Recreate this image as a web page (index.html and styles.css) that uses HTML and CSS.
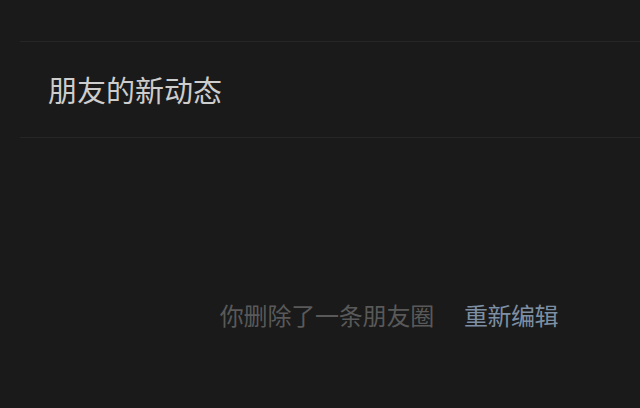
FILE: index.html
```html
<!DOCTYPE html>
<html lang="zh">
<head>
<meta charset="utf-8">
<link rel="stylesheet" href="styles.css">
</head>
<body>
<div class="page">
  <div class="top-space"></div>
  <div class="section">
    <div class="title">朋友的新动态</div>
  </div>
  <div class="notice">
    <span class="muted">你删除了一条朋友圈</span>
    <span class="link">重新编辑</span>
  </div>
</div>
</body>
</html>
```
FILE: styles.css
```css
html, body {
  margin: 0;
  padding: 0;
  background: #1a1a1a;
}
.page {
  width: 640px;
  height: 408px;
  overflow: hidden;
  background: #1a1a1a;
  font-family: "Noto Sans CJK SC", "Noto Sans", sans-serif;
}
.top-space {
  height: 41px;
}
.section {
  margin-left: 20px;
  border-top: 1px solid #262626;
  border-bottom: 1px solid #262626;
  height: 95px;
  display: flex;
  align-items: center;
  padding-left: 28px;
}
.title {
  font-size: 29px;
  line-height: 1;
  color: #cdcdcd;
  margin-top: 0;
}
.notice {
  display: flex;
  justify-content: flex-end;
  align-items: center;
  gap: 30px;
  padding-right: 82px;
  margin-top: 165px;
  font-size: 24px;
  line-height: 1;
}
.muted {
  color: #595959;
  letter-spacing: -0.2px;
}
.link {
  color: #7d8fa3;
  letter-spacing: -0.5px;
}
```
